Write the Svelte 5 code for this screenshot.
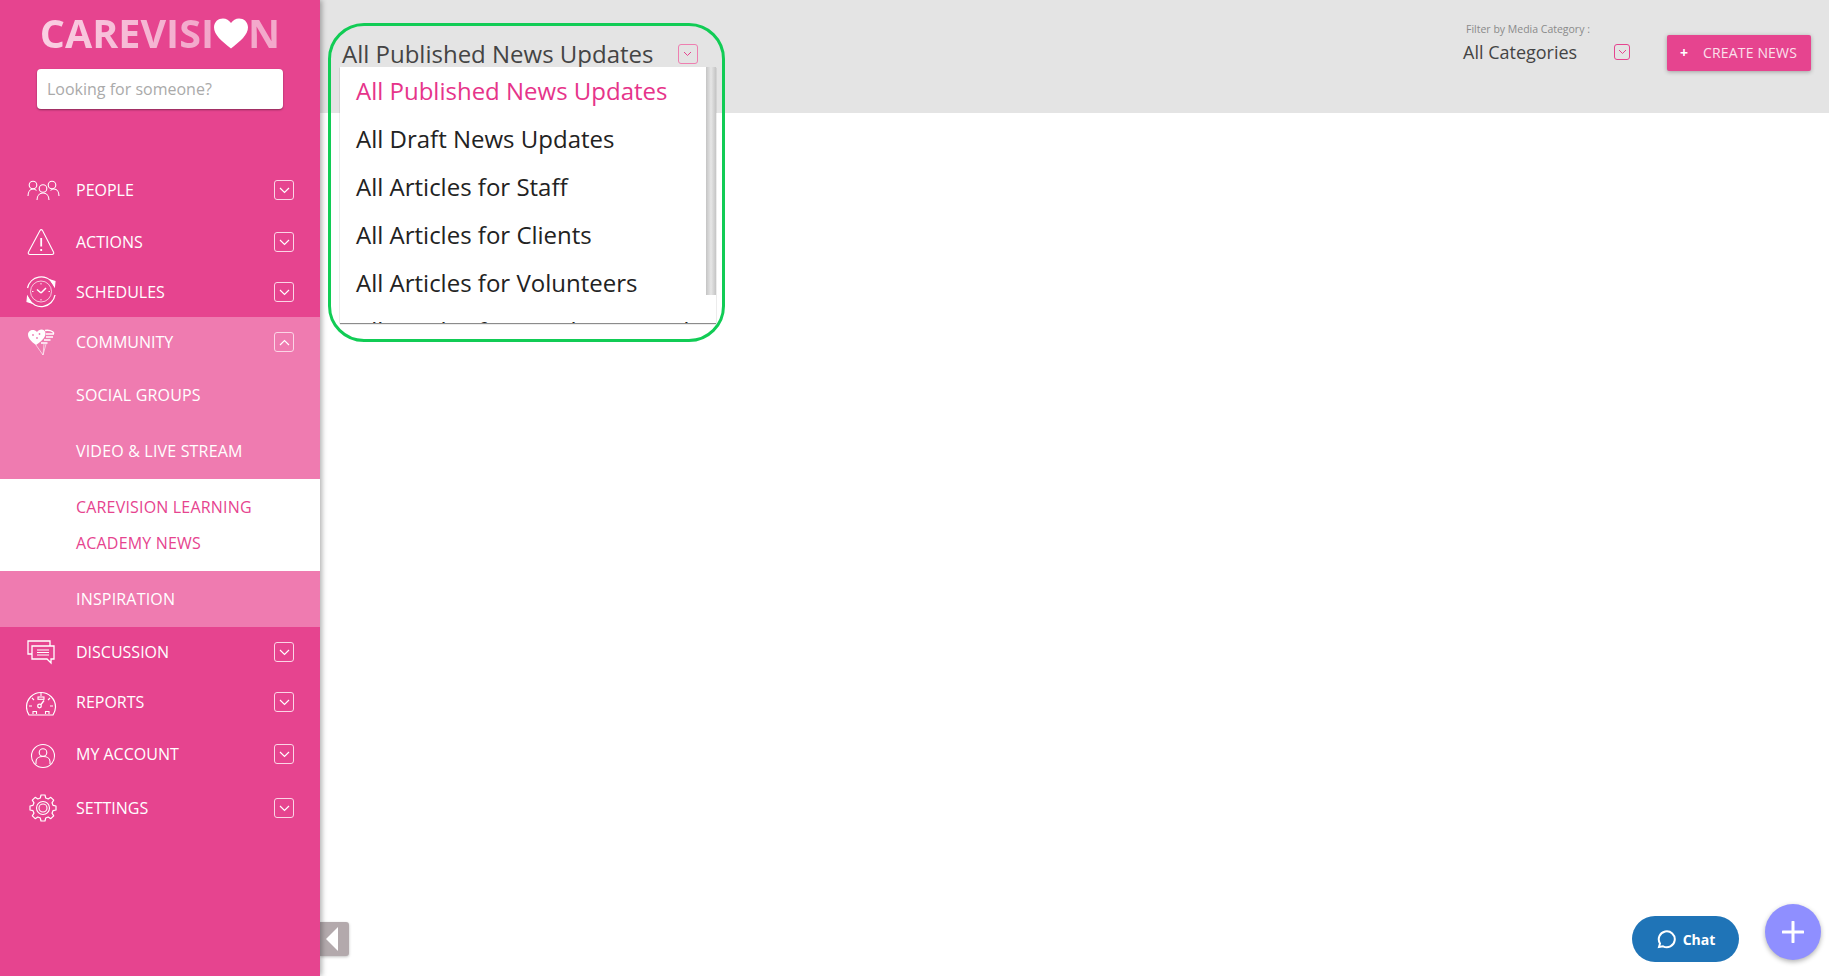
<script>
  const icons = {
    people: `<circle cx="7" cy="12" r="3.800"/><circle cx="17" cy="15.500" r="3.800"/><circle cx="26" cy="12" r="3.800"/><path d="M2 23c0-4 2-7 5-7 1.500 0 2.600.5 3.500 1.500M33 23c0-4-2-7-5-7-1.500 0-2.600.5-3.500 1.500M11 27c0-4 2.400-7 6-7s6 3 6 7" />`,
    actions: `<path d="M14 5.500 2.500 27c-.7 1.300 0 2.500 1.500 2.500h22c1.500 0 2.200-1.200 1.500-2.500L16.500 5.500c-.7-1.200-1.800-1.200-2.500 0z"/><path d="M15.200 13v8.500" stroke-width="1.800"/><path d="M15.200 24v2" stroke-width="1.800"/>`,
    schedules: `<path d="M27 8.500A14 14 0 0 0 1.500 13M3 24.500A14 14 0 0 0 29 20" stroke-width="1.300"/><circle cx="15" cy="16.500" r="10.500" stroke-width=".7"/><path d="M15 8v1.500M15 24v1.500M6 16.500h1.500M22.500 16.500H24" stroke-width=".9"/><path d="M15 18l-4-3.500M15 18l5-5" stroke-width="1.500"/><path d="M24.500 5l4.500 1.500-.5 5zM5.500 28 1 26.500l.5-5z" fill="#fff"/>`,
    community: `<path d="M10 20C4.500 16 2 13 2 9.500 2 5.500 7.500 3 11 7c2-3.500 8-3.500 8.500 1 .3 4-3.500 8-9.500 12z" fill="#fff" stroke="none"/><circle cx="7" cy="10" r=".9" fill="#ef7bb0" stroke="none"/><circle cx="11" cy="13" r=".9" fill="#ef7bb0" stroke="none"/><circle cx="13.500" cy="9" r=".9" fill="#ef7bb0" stroke="none"/><path d="M19 5.500c3-.7 8 0 9 3M20 9h8M20 12h7M18 15h6.500M15 18h6.500" stroke-width="1.300"/><path d="M10 20l7 10 1-11M20 19l-3 11" stroke-width=".6"/>`,
    discussion: `<path d="M6 19H2V6h22v5" stroke-width="1.300"/><path d="M6 11h22v13h-3v4l-4-4H6z" stroke-width="1.300"/><path d="M11 15h12M11 17.500h12M11 20h12" stroke-width="1.100"/>`,
    reports: `<path d="M3 30c-1.500-2.500-2.500-5-2.500-8C.5 14 7 7.500 15 7.500S29.500 14 29.500 22c0 3-1 5.500-2.500 8z" stroke-width="1.200"/><path d="M15 7v4M3 21h3M24 21h3M6 13l2 2M24 13l-2 2"/><rect x="12" y="12" width="6" height="2.300"/><circle cx="13.500" cy="21" r="1.800" stroke-width="1.300"/><path d="M15 19.500l3-4" stroke-width="1.300"/><path d="M7 29v-2.500h3.500V29M19.500 29v-2.500H23V29"/>`,
    account: `<circle cx="17" cy="19" r="11.500"/><circle cx="17" cy="15.500" r="3.800"/><path d="M10 27v-2.500c0-3 3-5 7-5s7 2 7 5V27"/>`,
    settings: `<circle cx="17" cy="17" r="6.500"/><circle cx="17" cy="17" r="4"/><path d="M15 4h4l.7 3 2.500 1 2.600-1.700 2.900 2.900-1.700 2.600 1 2.500 3 .7v4l-3 .7-1 2.500 1.700 2.600-2.900 2.900-2.600-1.700-2.500 1-.7 3h-4l-.7-3-2.500-1-2.600 1.700-2.900-2.900 1.700-2.600-1-2.500-3-.7v-4l3-.7 1-2.500-1.700-2.600 2.900-2.900 2.600 1.700 2.500-1z" stroke-width="1.200" stroke-linejoin="round"/>`
  };

  const before = [
    { label: 'PEOPLE', icon: 'people', h: 52 },
    { label: 'ACTIONS', icon: 'actions', h: 52 },
    { label: 'SCHEDULES', icon: 'schedules', h: 48 }
  ];
  const after = [
    { label: 'DISCUSSION', icon: 'discussion', h: 50 },
    { label: 'REPORTS', icon: 'reports', h: 50 },
    { label: 'MY ACCOUNT', icon: 'account', h: 54 },
    { label: 'SETTINGS', icon: 'settings', h: 54 }
  ];
  const options = [
    'All Published News Updates',
    'All Draft News Updates',
    'All Articles for Staff',
    'All Articles for Clients',
    'All Articles for Volunteers',
    'All Articles for Family & Friends'
  ];
</script>

{#snippet chevron(up)}
  <span class="chev">
    <svg width="11" height="7" viewBox="0 0 11 7"><path d={up ? 'M1 6l4.500-4.500L10 6' : 'M1 1l4.500 4.500L10 1'} /></svg>
  </span>
{/snippet}

{#snippet row(item)}
  <div class="row" style="height:{item.h}px">
    <svg class="icon" viewBox="0 0 34 34">{@html icons[item.icon]}</svg>
    <span>{item.label}</span>
    {@render chevron(false)}
  </div>
{/snippet}

<div class="page">
  <aside class="sidebar">
    <div class="logo"><span class="logo-text">CAREVISI</span><svg class="heart" viewBox="0 0 36 32"><path d="M18 32C8 24 0 17.500 0 9.500 0 3.500 4.500 0 9.500 0 13 0 16 2 18 5c2-3 5-5 8.500-5C31.500 0 36 3.500 36 9.500 36 17.500 28 24 18 32z" /></svg><span class="logo-text end">N</span></div>
    <input class="search" placeholder="Looking for someone?" />

    <nav>
      {#each before as item}
        {@render row(item)}
      {/each}

      <div class="group">
        <div class="row" style="height:50px">
          <svg class="icon" viewBox="0 0 34 34">{@html icons.community}</svg>
          <span>COMMUNITY</span>
          {@render chevron(true)}
        </div>
        <div class="sub">SOCIAL GROUPS</div>
        <div class="sub">VIDEO &amp; LIVE STREAM</div>
        <div class="active">
          <div>CAREVISION LEARNING</div>
          <div>ACADEMY NEWS</div>
        </div>
        <div class="sub">INSPIRATION</div>
      </div>

      {#each after as item}
        {@render row(item)}
      {/each}
    </nav>
  </aside>

  <main>
    <header>
      <div class="title">
        <span>All Published News Updates</span>
        <span class="pink-chev big"><svg width="9" height="6" viewBox="0 0 9 6"><path d="M1 1l3.500 3.500L8 1" /></svg></span>
      </div>

      <div class="tools">
        <div class="filter">
          <small>Filter by Media Category :</small>
          <div class="filter-value">
            <span>All Categories</span>
            <span class="pink-chev"><svg width="9" height="6" viewBox="0 0 9 6"><path d="M1 1l3.500 3.500L8 1" /></svg></span>
          </div>
        </div>
        <button class="create"><b>+</b>CREATE NEWS</button>
      </div>
    </header>

    <div class="menu">
      {#each options as option, i}
        <div class="option" class:selected={i === 0}>{option}</div>
      {/each}
      <div class="scrollbar"></div>
    </div>
    <div class="ring"></div>

    <div class="collapse"><i></i></div>

    <button class="chat">
      <svg width="20" height="20" viewBox="0 0 20 20"><path d="M3 18l1-3.500a8 8 0 1 1 3 2.800z" /></svg>
      Chat
    </button>
    <button class="fab" aria-label="Add">
      <svg width="22" height="22" viewBox="0 0 22 22"><path d="M11 1v20M1 11h20" /></svg>
    </button>
  </main>
</div>

<style>
  :global(body) {
    margin: 0;
    overflow: hidden;
    background: #fff;
    font-family: "Open Sans", sans-serif;
  }

  .page {
    display: flex;
    height: 976px;
  }

  .sidebar {
    width: 320px;
    flex-shrink: 0;
    display: flex;
    flex-direction: column;
    background: #e6448f;
    box-shadow: 2px 0 5px rgba(0, 0, 0, 0.3);
    position: relative;
    z-index: 2;
  }

  .logo {
    display: flex;
    justify-content: center;
    align-items: center;
    height: 50px;
    margin-top: 8px;
    font-size: 39.5px;
    font-weight: 700;
    line-height: 50px;
  }

  .logo-text {
    background: linear-gradient(90deg, #fad0e3, #f2a5c9);
    background-clip: text;
    -webkit-background-clip: text;
    color: transparent;
  }

  .logo-text.end {
    background: #f3a9cb;
    background-clip: text;
    -webkit-background-clip: text;
  }

  .heart {
    width: 34px;
    height: 31px;
    fill: #fff;
  }

  .search {
    box-sizing: border-box;
    width: 246px;
    height: 40px;
    margin: 11px 0 0 37px;
    padding: 0 10px;
    border: 0;
    border-radius: 4px;
    background: #fff;
    box-shadow: 0 1px 2px rgba(0, 0, 0, 0.4);
    font: 16px "Open Sans", sans-serif;
  }

  .search::placeholder {
    color: #aaa;
    opacity: 1;
  }

  nav {
    margin-top: 55px;
    color: #fff;
    font-size: 16px;
  }

  .row {
    display: flex;
    align-items: center;
    padding: 0 26px;
  }

  .row span:nth-of-type(1) {
    flex: 1;
  }

  .icon {
    width: 34px;
    height: 34px;
    margin-right: 16px;
    fill: none;
    stroke: #fff;
    stroke-width: 1.1;
  }

  .chev {
    display: flex;
    align-items: center;
    justify-content: center;
    flex: none !important;
    box-sizing: border-box;
    width: 20px;
    height: 20px;
    border: 1px solid #fbd5e6;
    border-radius: 3px;
  }

  .chev svg,
  .pink-chev svg {
    fill: none;
    stroke: #fff;
    stroke-width: 1.2;
  }

  .group {
    margin-top: 1px;
    background: #ef7bb0;
  }

  .sub {
    display: flex;
    align-items: center;
    height: 56px;
    padding-left: 76px;
    letter-spacing: 0.18px;
  }

  .active {
    padding: 10px 0 10px 76px;
    background: #fff;
    color: #e6448f;
    letter-spacing: 0.18px;
  }

  .active div {
    height: 36px;
    line-height: 36px;
  }

  main {
    flex: 1;
    position: relative;
    min-width: 0;
  }

  header {
    box-sizing: border-box;
    height: 113px;
    display: flex;
    justify-content: space-between;
    padding: 0 18px 0 22px;
    background: #e4e4e4;
    color: #444;
  }

  .title {
    display: flex;
    align-items: center;
    height: 36px;
    margin-top: 36px;
    font-size: 24px;
    line-height: 34px;
  }

  .title span:first-child {
    margin-top: -1px;
  }

  .pink-chev {
    display: flex;
    align-items: center;
    justify-content: center;
    box-sizing: border-box;
    width: 16px;
    height: 16px;
    border: 1px solid #e6448f;
    border-radius: 3px;
  }

  .pink-chev svg {
    stroke: #e6448f;
    stroke-width: 1;
  }

  .pink-chev.big {
    width: 20px;
    height: 20px;
    margin-left: 24px;
    border-color: #ee7fb0;
  }

  .tools {
    display: flex;
    align-items: flex-start;
    gap: 37px;
    padding-top: 35px;
  }

  .filter {
    margin-top: -13px;
    width: 167px;
  }

  .filter small {
    display: block;
    margin-left: 3px;
    font-size: 10.5px;
    line-height: 14px;
    color: #8a8a8a;
  }

  .filter-value {
    display: flex;
    align-items: center;
    justify-content: space-between;
    margin-top: 3px;
    font-size: 18px;
    line-height: 26px;
  }

  .create {
    box-sizing: border-box;
    width: 144px;
    height: 36px;
    padding: 0 0 2px 13px;
    display: flex;
    align-items: center;
    border: 0;
    border-radius: 2px;
    background: #e6448f;
    color: #fbe0ec;
    box-shadow: 0 1px 4px rgba(0, 0, 0, 0.3);
    font: 14px "Open Sans", sans-serif;
    letter-spacing: 0.17px;
  }

  .create b {
    width: 23px;
    color: #fff;
    font-size: 14px;
    text-align: left;
  }

  .menu {
    position: absolute;
    left: 20px;
    top: 67px;
    width: 376px;
    height: 256px;
    overflow: hidden;
    background: #fff;
    box-shadow: 0 1px 1px rgba(0, 0, 0, 0.45);
    font-size: 24px;
    color: #222;
  }

  .option {
    height: 48px;
    line-height: 48px;
    padding-left: 16px;
    white-space: nowrap;
  }

  .option.selected {
    color: #e6348a;
  }

  .scrollbar {
    position: absolute;
    top: 0;
    right: 0;
    width: 10px;
    height: 228px;
    background: linear-gradient(90deg, #c4c4c4, #e6e6e6 50%, #c4c4c4);
  }

  .ring {
    position: absolute;
    left: 8px;
    top: 23px;
    width: 397px;
    height: 319px;
    box-sizing: border-box;
    border: 3px solid #11cc55;
    border-radius: 36px;
    pointer-events: none;
  }

  .collapse {
    position: absolute;
    left: 0;
    top: 922px;
    width: 29px;
    height: 34px;
    display: flex;
    align-items: center;
    padding-left: 6px;
    box-sizing: border-box;
    border-radius: 0 3px 3px 0;
    background: #b3a9ac;
    box-shadow: 0 1px 3px rgba(0, 0, 0, 0.25);
  }

  .collapse i {
    border-top: 12px solid transparent;
    border-bottom: 12px solid transparent;
    border-right: 12px solid #fff;
  }

  .chat {
    position: absolute;
    left: 1312px;
    top: 916px;
    width: 107px;
    height: 46px;
    display: flex;
    align-items: center;
    justify-content: center;
    gap: 7px;
    padding: 0;
    border: 0;
    border-radius: 23px;
    background: #1f74b7;
    color: #fff;
    font: 700 14px "Open Sans", sans-serif;
  }

  .chat svg {
    fill: none;
    stroke: #fff;
    stroke-width: 2;
  }

  .fab {
    position: absolute;
    left: 1445px;
    top: 904px;
    width: 56px;
    height: 56px;
    display: flex;
    align-items: center;
    justify-content: center;
    padding: 0;
    border: 0;
    border-radius: 50%;
    background: #8f8fff;
    box-shadow: 0 2px 5px rgba(0, 0, 0, 0.3);
  }

  .fab svg {
    fill: none;
    stroke: #fff;
    stroke-width: 3;
    stroke-linecap: round;
  }
</style>
